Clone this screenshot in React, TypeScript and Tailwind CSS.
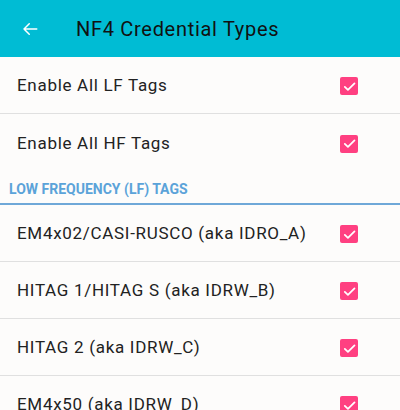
import React from "react";

function Check() {
  return (
    <div className="w-[18px] h-[18px] rounded-[2px] bg-[#ff4081] flex items-center justify-center">
      <svg width="15" height="15" viewBox="0 0 24 24">
        <path d="M4.5 12.5l5 5L20 7" fill="none" stroke="white" strokeWidth="2.8" strokeLinecap="round" strokeLinejoin="round" />
      </svg>
    </div>
  );
}

function Row({ label, divider = true }: { label: string; divider?: boolean }) {
  return (
    <div className={`h-[57px] flex items-center justify-between pl-[17px] pr-[42px] pt-[2px] ${divider ? "border-b border-[#e0e0e0]" : ""}`}>
      <span className="text-[17px] tracking-[0.7px] text-[#222]">{label}</span>
      <Check />
    </div>
  );
}

export default function App() {
  return (
    <div className="w-[400px] h-[410px] overflow-hidden bg-[#fdfcfb]" style={{ fontFamily: "Roboto, 'Noto Sans', sans-serif" }}>
      <div className="h-[57px] bg-[#00bcd4] flex items-center">
        <svg className="ml-[21px]" width="18" height="18" viewBox="0 0 24 24">
          <path d="M21 12H4M11 5l-7 7 7 7" fill="none" stroke="white" strokeWidth="2" strokeLinecap="round" strokeLinejoin="round" />
        </svg>
        <span className="ml-[37px] text-[20px] tracking-[0.7px] text-[#111]">NF4 Credential Types</span>
      </div>
      <Row label="Enable All LF Tags" />
      <Row label="Enable All HF Tags" divider={false} />
      <div className="h-[34px] flex items-center pl-[9px] pt-[4px] border-b-2 border-[#6fa8d8]">
        <span className="text-[14px] font-bold text-[#5ba3d9]">LOW FREQUENCY (LF) TAGS</span>
      </div>
      <Row label="EM4x02/CASI-RUSCO (aka IDRO_A)" />
      <Row label="HITAG 1/HITAG S (aka IDRW_B)" />
      <Row label="HITAG 2 (aka IDRW_C)" />
      <Row label="EM4x50 (aka IDRW_D)" />
    </div>
  );
}
